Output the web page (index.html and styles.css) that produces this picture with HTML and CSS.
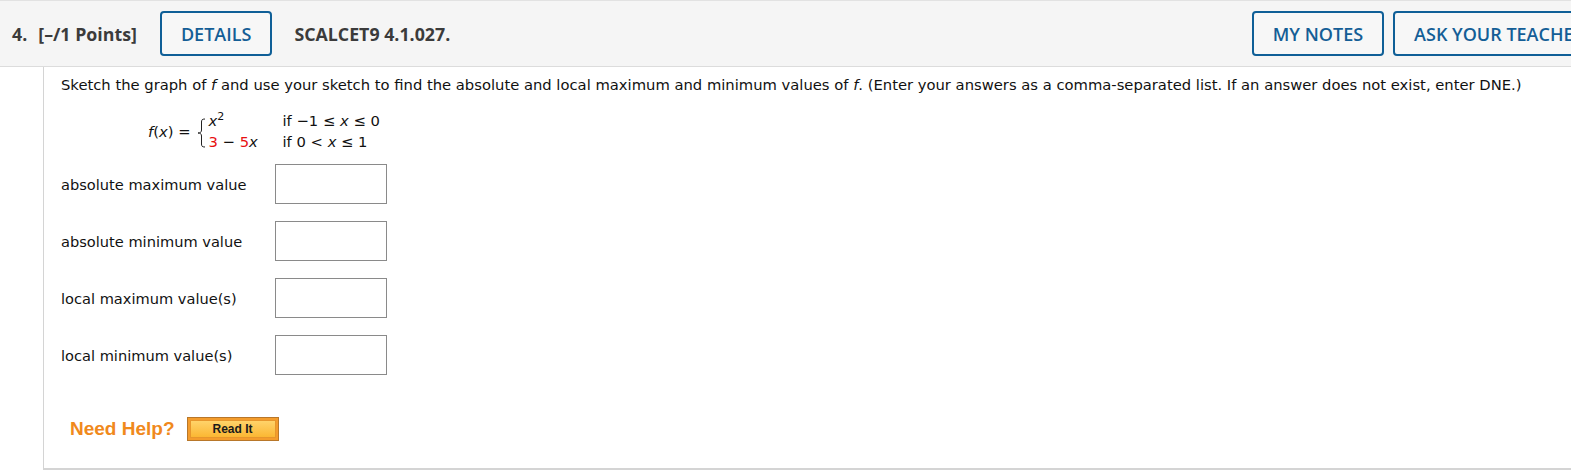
FILE: index.html
```html
<!DOCTYPE html>
<html>
<head>
<meta charset="utf-8">
<link rel="stylesheet" href="styles.css">
</head>
<body>
<div class="header">
  <div class="qnum">4.</div>
  <div class="points">[–/1 Points]</div>
  <button class="hbtn details">DETAILS</button>
  <div class="code">SCALCET9 4.1.027.</div>
  <div class="spacer"></div>
  <button class="hbtn notes">MY NOTES</button>
  <button class="hbtn ask">ASK YOUR TEACHER</button>
</div>
<div class="content">
  <p class="prompt">Sketch the graph of <i>f</i> and use your sketch to find the absolute and local maximum and minimum values of <i>f</i>. (Enter your answers as a comma-separated list. If an answer does not exist, enter DNE.)</p>
  <div class="formula">
    <div class="lhs"><i>f</i>(<i>x</i>) =</div>
    <svg class="brace" width="9" height="30" viewBox="0 0 9 30"><path d="M8 1 C5 1 4.5 2 4.5 4 L4.5 12 C4.5 14 3.5 15 1 15 C3.5 15 4.5 16 4.5 18 L4.5 26 C4.5 28 5 29 8 29" fill="none" stroke="#222" stroke-width="1"/></svg>
    <div class="cases">
      <div class="expr"><i>x</i><sup>2</sup></div>
      <div class="cond">if −1 ≤ <i>x</i> ≤ 0</div>
      <div class="expr"><span class="red">3</span> − <span class="red">5</span><i>x</i></div>
      <div class="cond">if 0 &lt; <i>x</i> ≤ 1</div>
    </div>
  </div>
  <div class="answers">
    <div class="label">absolute maximum value</div><div class="box"></div>
    <div class="label">absolute minimum value</div><div class="box"></div>
    <div class="label">local maximum value(s)</div><div class="box"></div>
    <div class="label">local minimum value(s)</div><div class="box"></div>
  </div>
  <div class="help">
    <span class="needhelp">Need Help?</span>
    <span class="readit"><span class="readit-in">Read It</span></span>
  </div>
</div>
</body>
</html>
```

FILE: styles.css
```css
html, body { margin: 0; padding: 0; background: #fff; }
body { width: 1571px; overflow: hidden; }
.header {
  display: flex;
  align-items: center;
  height: 67px;
  background: #f5f5f5;
  border-top: 1px solid #e2e2e2;
  border-bottom: 1px solid #dcdcdc;
  box-sizing: border-box;
  font-family: "Open Sans", sans-serif;
  font-weight: 700;
  font-size: 17.8px;
  color: #3b3b3b;
  white-space: nowrap;
  width: 1571px;
  overflow: hidden;
}
.qnum { margin-left: 12px; flex: none; }
.points { margin-left: 11px; flex: none; }
.hbtn {
  flex: none;
  font-family: "Open Sans", sans-serif;
  font-weight: 600;
  font-size: 18px;
  color: #145e96;
  background: #f7f7f7;
  border: 2px solid #0f5f97;
  border-radius: 4px;
  height: 45px;
  padding: 0 19px;
  white-space: nowrap;
}
.details { margin-left: 23px; }
.code { margin-left: 22px; flex: none; }
.spacer { flex: 1; }
.notes { margin-left: 0; }
.ask { margin-left: 9px; margin-right: -35px; }

.content {
  margin-left: 43px;
  border-left: 1px solid #d4d4d4;
  border-bottom: 2px solid #d4d4d4;
  height: 401px;
  font-family: "DejaVu Sans", Verdana, sans-serif;
  font-size: 14.75px;
  color: #111;
  padding-left: 17px;
}
.label { font-size: 14.6px; }
.prompt { margin: 0; padding-top: 8px; line-height: 20px; }
.formula { display: flex; align-items: center; margin-left: 87px; margin-top: 15px; }
.lhs { margin-right: 6px; }
.brace { margin-top: 3px; margin-right: 3px; }
.cases { display: grid; grid-template-columns: 74px auto; line-height: 21px; }
.cases sup { font-size: 11px; line-height: 0; }
.red { color: #e81010; }
.answers {
  display: grid;
  grid-template-columns: 214px 112px;
  row-gap: 17px;
  margin-top: 12px;
  align-items: center;
}
.box { height: 38px; border: 1px solid #8a8a8a; width: 110px; }
.help { display: flex; align-items: center; margin-top: 42px; margin-left: 9px; }
.needhelp { font-family: "Liberation Sans", Arial, sans-serif; font-weight: bold; font-size: 19px; color: #f0891c; }
.readit {
  margin-left: 12px;
  border: 1px solid #b8772a;
  background: #f49c2c;
  padding: 2px;
}
.readit-in {
  display: block;
  width: 84px;
  height: 16px;
  background: linear-gradient(#ffd36a, #fbb733);
  border: 1px solid #e7962c;
  font-family: "Liberation Sans", Arial, sans-serif;
  font-weight: bold;
  font-size: 12px;
  line-height: 16px;
  text-align: center;
  color: #1a1a1a;
}
```
